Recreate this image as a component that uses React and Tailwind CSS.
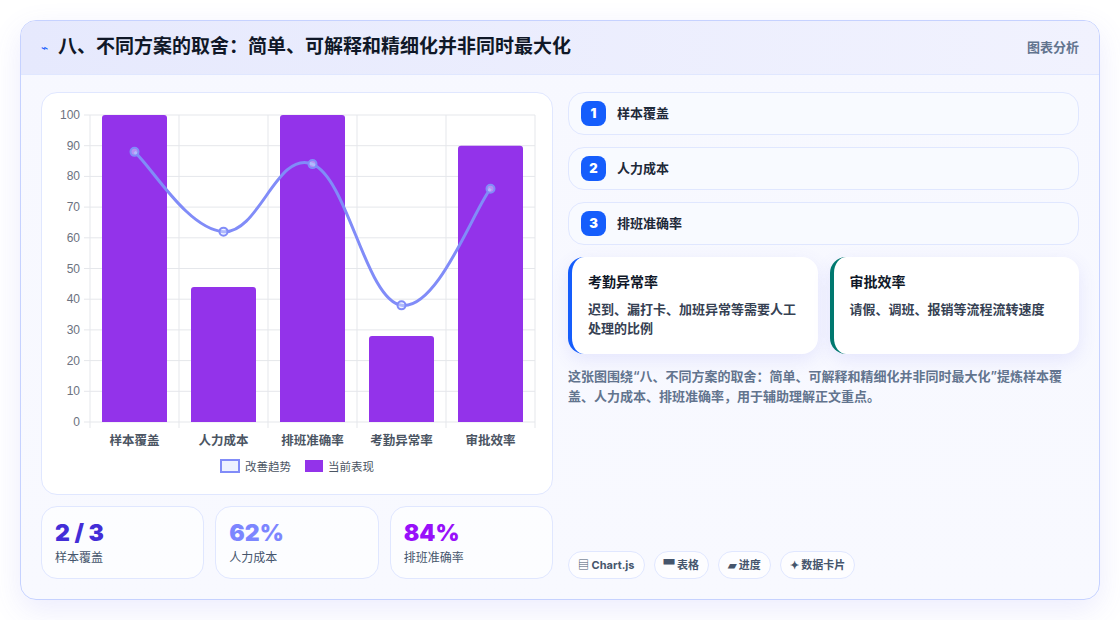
import React from "react";

const cats = ["样本覆盖", "人力成本", "排班准确率", "考勤异常率", "审批效率"];
const bars = [100, 44, 100, 28, 90];
const line = [88, 62, 84, 38, 76];
const X0 = 48, X1 = 493, Y0 = 22, Y1 = 329;
const step = (X1 - X0) / 5;
const yOf = (v) => Y1 - (v / 100) * (Y1 - Y0);

function linePath() {
  const p = line.map((v, i) => [X0 + step / 2 + i * step, yOf(v)]);
  let d = `M${p[0][0]},${p[0][1]}`;
  const t = 0.4;
  for (let i = 0; i < p.length - 1; i++) {
    const a = p[i - 1] || p[i], b = p[i], c = p[i + 1], e = p[i + 2] || c;
    const c1 = [b[0] + (c[0] - a[0]) * t / 2, b[1] + (c[1] - a[1]) * t / 2];
    const c2 = [c[0] - (e[0] - b[0]) * t / 2, c[1] - (e[1] - b[1]) * t / 2];
    d += ` C${c1[0]},${c1[1]} ${c2[0]},${c2[1]} ${c[0]},${c[1]}`;
  }
  return { d, p };
}

function Chart() {
  const { d, p } = linePath();
  return (
    <svg width="512" height="403" className="block">
      {[0,10,20,30,40,50,60,70,80,90,100].map((v) => (
        <g key={v}>
          <line x1={X0 - 6} x2={X1} y1={yOf(v)} y2={yOf(v)} stroke="#e5e7eb" />
          <text x={X0 - 10} y={yOf(v) + 4} textAnchor="end" fontSize="12" fill="#6b7280" fontFamily="Liberation Sans, sans-serif">{v}</text>
        </g>
      ))}
      {[0,1,2,3,4,5].map((i) => (
        <line key={i} x1={X0 + i * step} x2={X0 + i * step} y1={Y0} y2={Y1 + 6} stroke="#e5e7eb" />
      ))}
      {bars.map((v, i) => (
        <path key={i} d={`M${X0 + 12 + i * step},${Y1} V${yOf(v) + 3} q0,-3 3,-3 H${X0 + step - 12 + i * step - 3} q3,0 3,3 V${Y1} Z`} fill="#9333ea" />
      ))}
      <path d={d} fill="none" stroke="#818cf8" strokeWidth="3" />
      {p.map((q, i) => (
        <circle key={i} cx={q[0]} cy={q[1]} r="4" fill="#e0e7ff" fillOpacity="0.5" stroke="#818cf8" strokeWidth="2" />
      ))}
      {cats.map((c, i) => (
        <text key={c} x={X0 + step / 2 + i * step} y={352} textAnchor="middle" fontSize="12.5" fill="#4b5563" fontWeight="600" fontFamily="Noto Sans CJK SC, sans-serif">{c}</text>
      ))}
      <rect x="179" y="367" width="18" height="12" fill="#eef2ff" stroke="#818cf8" strokeWidth="2" />
      <text x="203" y="378" fontSize="11.5" fill="#4b5563" fontFamily="Noto Sans CJK SC, sans-serif">改善趋势</text>
      <rect x="263" y="367" width="18" height="12" fill="#9333ea" />
      <text x="286" y="378" fontSize="11.5" fill="#4b5563" fontFamily="Noto Sans CJK SC, sans-serif">当前表现</text>
    </svg>
  );
}

export default function App() {
  const font = { fontFamily: "Inter, 'Noto Sans CJK SC', sans-serif" };
  return (
    <div className="w-[1120px] h-[620px] bg-white p-5" style={font}>
      <div className="h-[580px] rounded-2xl border border-indigo-200 bg-gradient-to-b from-[#f7f8ff] to-[#f8f9ff] shadow-[0_10px_30px_rgba(99,102,241,0.12)] overflow-hidden flex flex-col">
        <div className="h-[55px] flex items-center justify-between px-5 bg-gradient-to-r from-[#e6e9fd] to-[#f1f2fe] border-b border-indigo-100">
          <div className="flex items-center gap-2.5">
            <span className="text-blue-600 text-xs">⌁</span>
            <span className="text-[19px] font-bold text-gray-900">八、不同方案的取舍：简单、可解释和精细化并非同时最大化</span>
          </div>
          <span className="text-[13px] font-semibold text-slate-500">图表分析</span>
        </div>
        <div className="flex-1 flex gap-[15px] px-5 pt-[17px] pb-5">
          <div className="w-[512px] flex flex-col gap-[11px]">
            <div className="h-[403px] bg-white rounded-2xl border border-indigo-100">
              <Chart />
            </div>
            <div className="flex gap-[11px]">
              {[["2 / 3", "text-indigo-700", "样本覆盖"], ["62%", "text-indigo-400", "人力成本"], ["84%", "text-purple-600", "排班准确率"]].map(([v, c, l]) => (
                <div key={l} className="flex-1 h-[73px] rounded-2xl border border-indigo-100 bg-white/60 px-[13px] pt-[12px]">
                  <div className={`text-[23px] leading-[28px] font-black ${c}`} style={{ fontFamily: "Inter, sans-serif" }}>{v}</div>
                  <div className="text-xs text-slate-600 mt-[3px]">{l}</div>
                </div>
              ))}
            </div>
          </div>
          <div className="flex-1 flex flex-col pr-0">
            <div className="flex flex-col gap-3">
              {["样本覆盖", "人力成本", "排班准确率"].map((t, i) => (
                <div key={t} className="h-[43px] rounded-2xl border border-indigo-100 bg-[#f8faff] flex items-center gap-[11px] px-3">
                  <span className="w-[25px] h-[25px] rounded-lg bg-blue-600 text-white text-[13px] font-black flex items-center justify-center">{i + 1}</span>
                  <span className="text-[13px] font-semibold text-gray-800">{t}</span>
                </div>
              ))}
            </div>
            <div className="flex gap-3 mt-3">
              <div className="flex-1 h-[97px] rounded-2xl bg-white border-l-4 border-blue-600 shadow-[0_6px_18px_rgba(99,102,241,0.12)] px-4 pt-[15px]">
                <div className="text-sm font-bold text-gray-900">考勤异常率</div>
                <div className="text-[13px] font-semibold text-gray-700 mt-[8px] leading-[19px]">迟到、漏打卡、加班异常等需要人工处理的比例</div>
              </div>
              <div className="flex-1 h-[97px] rounded-2xl bg-white border-l-4 border-teal-700 shadow-[0_6px_18px_rgba(99,102,241,0.12)] px-4 pt-[15px]">
                <div className="text-sm font-bold text-gray-900">审批效率</div>
                <div className="text-[13px] font-semibold text-gray-700 mt-[8px] leading-[19px]">请假、调班、报销等流程流转速度</div>
              </div>
            </div>
            <p className="mt-3 text-[13px] font-semibold text-slate-500 leading-[20px]">这张图围绕“八、不同方案的取舍：简单、可解释和精细化并非同时最大化”提炼样本覆盖、人力成本、排班准确率，用于辅助理解正文重点。</p>
            <div className="mt-auto flex gap-[9px]">
              {["▤ Chart.js", "▀ 表格", "▰ 进度", "✦ 数据卡片"].map((t) => (
                <span key={t} className="h-[28px] px-[9px] rounded-full border border-indigo-100 bg-white/70 text-[11px] font-bold text-slate-600 flex items-center">{t}</span>
              ))}
            </div>
          </div>
        </div>
      </div>
    </div>
  );
}
